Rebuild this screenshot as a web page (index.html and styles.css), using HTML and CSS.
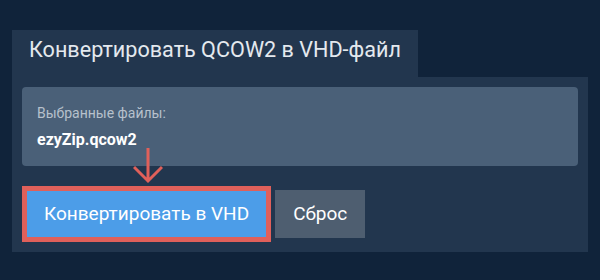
FILE: index.html
```html
<!DOCTYPE html>
<html lang="ru">
  <head>
    <meta charset="UTF-8" />
    <title>QCOW2 в VHD</title>
    <link rel="stylesheet" href="styles.css">
  </head>
  <body>
    <div class="converter">
      <div class="tab">Конвертировать QCOW2 в VHD-файл</div>
      <div class="panel">
        <div class="files">
          <div class="files-label">Выбранные файлы:</div>
          <div class="files-name">ezyZip.qcow2</div>
        </div>
        <div class="actions">
          <button class="btn btn-convert">Конвертировать в VHD</button>
          <button class="btn btn-reset">Сброс</button>
        </div>
        <svg class="pointer" viewBox="0 0 30 36" width="30" height="36">
          <path d="M15 0 V33 M1 19 L15 33 L29 19" />
        </svg>
      </div>
    </div>
  </body>
</html>
```

FILE: styles.css
```css
body {
  margin: 0;
  padding: 0;
  background-color: #10233a;
  font-family: Roboto, "Noto Sans", sans-serif;
  color: #fff;
}

.converter {
  padding: 30px 12px 0;
}

.tab {
  display: inline-block;
  box-sizing: border-box;
  height: 47px;
  padding: 7px 17px 0;
  background-color: #22364e;
  color: #e4e9ee;
  font-size: 21.6px;
  font-weight: 400;
}

.panel {
  position: relative;
  padding: 10px 10px 14px;
  background-color: #22364e;
}

.files {
  box-sizing: border-box;
  height: 79px;
  padding: 16px 15px 0;
  background-color: #4a6078;
  border-radius: 4px;
}

.files-label {
  font-size: 14px;
  line-height: 20px;
  color: #b7c1cc;
}

.files-name {
  margin-top: 6px;
  font-size: 16px;
  line-height: 22px;
  font-weight: 700;
  color: #fff;
}

.actions {
  display: flex;
  margin-top: 24px;
}

.btn {
  height: 48px;
  padding: 0 18px;
  border: none;
  border-radius: 0;
  font-family: inherit;
  font-size: 19px;
  line-height: 48px;
  color: #fff;
  cursor: pointer;
}

.btn-convert {
  margin-left: 4px;
  background-color: #4c9de8;
  outline: 5px solid #e0605a;
  outline-offset: -1px;
}

.btn-reset {
  margin-left: 8px;
  background-color: #4e5e70;
}

.pointer {
  position: absolute;
  left: 121px;
  top: 71px;
  fill: none;
  stroke: #e0605a;
  stroke-width: 3;
}
```
